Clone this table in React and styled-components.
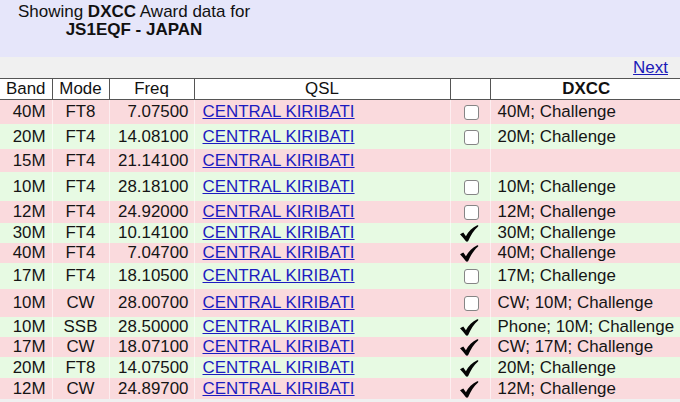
import React from "react";
import styled, { createGlobalStyle } from "styled-components";

const Global = createGlobalStyle`
  html, body { margin: 0; padding: 0; background: #f0f0f0; }
  body { font-family: "Liberation Sans", Arial, sans-serif; color: #111; overflow: hidden; }
`;

const Page = styled.div`
  width: 680px;
  height: 402px;
  overflow: hidden;
  background: #f0f0f0;
`;

const Banner = styled.div`
  height: 57px;
  background: #e6e6fa;
  box-sizing: border-box;
  padding-top: 3px;
`;

const Title = styled.div`
  width: 268px;
  text-align: center;
  font-size: 17px;
  line-height: 18px;
  color: #111;
  b { font-weight: bold; }
`;

const NavBar = styled.div`
  height: 21px;
  display: flex;
  justify-content: flex-end;
  align-items: flex-end;
  padding-right: 12px;
`;

const NavLink = styled.a`
  font-size: 17px;
  line-height: 20px;
  color: #1a1ab8;
  text-decoration: underline;
  cursor: pointer;
`;

const Table = styled.table`
  border-collapse: collapse;
  width: 682px;
  table-layout: fixed;
  font-size: 16.9px;
`;

const HeadCell = styled.th`
  height: 20px;
  padding: 0;
  background: #fff;
  border-top: 1px solid #555;
  border-bottom: 1px solid #555;
  border-left: ${(p) => (p.$first ? "none" : "1px solid #555")};
  font-weight: ${(p) => (p.$bold ? "bold" : "normal")};
  text-align: center;
  color: #111;
  line-height: 20px;
`;

const Row = styled.tr`
  background: ${(p) => (p.$tone === "pink" ? "#fadadd" : "#e7fae3")};
  height: ${(p) => p.$h}px;
`;

const Cell = styled.td`
  padding: 0 ${(p) => p.$pr || 0}px 0 ${(p) => p.$pl || 0}px;
  text-align: ${(p) => p.$align || "left"};
  vertical-align: middle;
  border-left: ${(p) => (p.$first ? "none" : "1px solid rgba(255,255,255,0.55)")};
  white-space: nowrap;
  line-height: 19px;
  color: #151515;
`;

const QslLink = styled.a`
  color: #1c1cc0;
  text-decoration: underline;
  cursor: pointer;
`;

const Box = styled.span`
  display: inline-block;
  width: 13px;
  height: 13px;
  border: 1.5px solid #858585;
  border-radius: 3px;
  background: #fff;
  vertical-align: middle;
  margin-left: 2px;
`;

const Tick = styled.svg`
  display: inline-block;
  vertical-align: middle;
  margin-left: -2px;
`;

const Check = () => (
  <Tick width="20" height="17" viewBox="0 0 20 17">
    <path
      d="M1 9.3 L4.3 7.4 C5.3 8.7 6.1 10 6.9 11.3 C9.4 6.6 13.3 2.6 18.3 0.3 C19.1 0.1 19.6 0.8 19.1 1.4 C14.8 5.2 11.6 10.2 9.2 16 C8.8 16.9 7.5 17 6.9 16.3 C5.1 13.8 3.3 11.5 1 9.3 Z"
      fill="#050505"
    />
  </Tick>
);

const rows = [
  { band: "40M", mode: "FT8", freq: "7.07500", mark: "box", dxcc: "40M; Challenge", h: 24 },
  { band: "20M", mode: "FT4", freq: "14.08100", mark: "box", dxcc: "20M; Challenge", h: 25 },
  { band: "15M", mode: "FT4", freq: "21.14100", mark: null, dxcc: "", h: 23 },
  { band: "10M", mode: "FT4", freq: "28.18100", mark: "box", dxcc: "10M; Challenge", h: 29 },
  { band: "12M", mode: "FT4", freq: "24.92000", mark: "box", dxcc: "12M; Challenge", h: 22 },
  { band: "30M", mode: "FT4", freq: "10.14100", mark: "check", dxcc: "30M; Challenge", h: 20 },
  { band: "40M", mode: "FT4", freq: "7.04700", mark: "check", dxcc: "40M; Challenge", h: 20 },
  { band: "17M", mode: "FT4", freq: "18.10500", mark: "box", dxcc: "17M; Challenge", h: 26 },
  { band: "10M", mode: "CW", freq: "28.00700", mark: "box", dxcc: "CW; 10M; Challenge", h: 28 },
  { band: "10M", mode: "SSB", freq: "28.50000", mark: "check", dxcc: "Phone; 10M; Challenge", h: 20 },
  { band: "17M", mode: "CW", freq: "18.07100", mark: "check", dxcc: "CW; 17M; Challenge", h: 20 },
  { band: "20M", mode: "FT8", freq: "14.07500", mark: "check", dxcc: "20M; Challenge", h: 21 },
  { band: "12M", mode: "CW", freq: "24.89700", mark: "check", dxcc: "12M; Challenge", h: 21 },
];

export default function App() {
  return (
    <Page>
      <Global />
      <Banner>
        <Title>
          Showing <b>DXCC</b> Award data for
          <br />
          <b>JS1EQF - JAPAN</b>
        </Title>
      </Banner>
      <NavBar>
        <NavLink>Next</NavLink>
      </NavBar>
      <Table>
        <colgroup>
          <col style={{ width: 52 }} />
          <col style={{ width: 57 }} />
          <col style={{ width: 85 }} />
          <col style={{ width: 256 }} />
          <col style={{ width: 40 }} />
          <col style={{ width: 192 }} />
        </colgroup>
        <thead>
          <tr>
            <HeadCell $first>Band</HeadCell>
            <HeadCell>Mode</HeadCell>
            <HeadCell>Freq</HeadCell>
            <HeadCell>QSL</HeadCell>
            <HeadCell />
            <HeadCell $bold>DXCC</HeadCell>
          </tr>
        </thead>
        <tbody>
          {rows.map((r, i) => (
            <Row key={i} $tone={i % 2 === 0 ? "pink" : "green"} $h={r.h}>
              <Cell $first $align="right" $pr={6}>{r.band}</Cell>
              <Cell $align="center">{r.mode}</Cell>
              <Cell $align="right" $pr={5}>{r.freq}</Cell>
              <Cell $pl={8}><QslLink>CENTRAL KIRIBATI</QslLink></Cell>
              <Cell $align="center">
                {r.mark === "box" && <Box />}
                {r.mark === "check" && <Check />}
              </Cell>
              <Cell $pl={7}>{r.dxcc}</Cell>
            </Row>
          ))}
        </tbody>
      </Table>
    </Page>
  );
}
